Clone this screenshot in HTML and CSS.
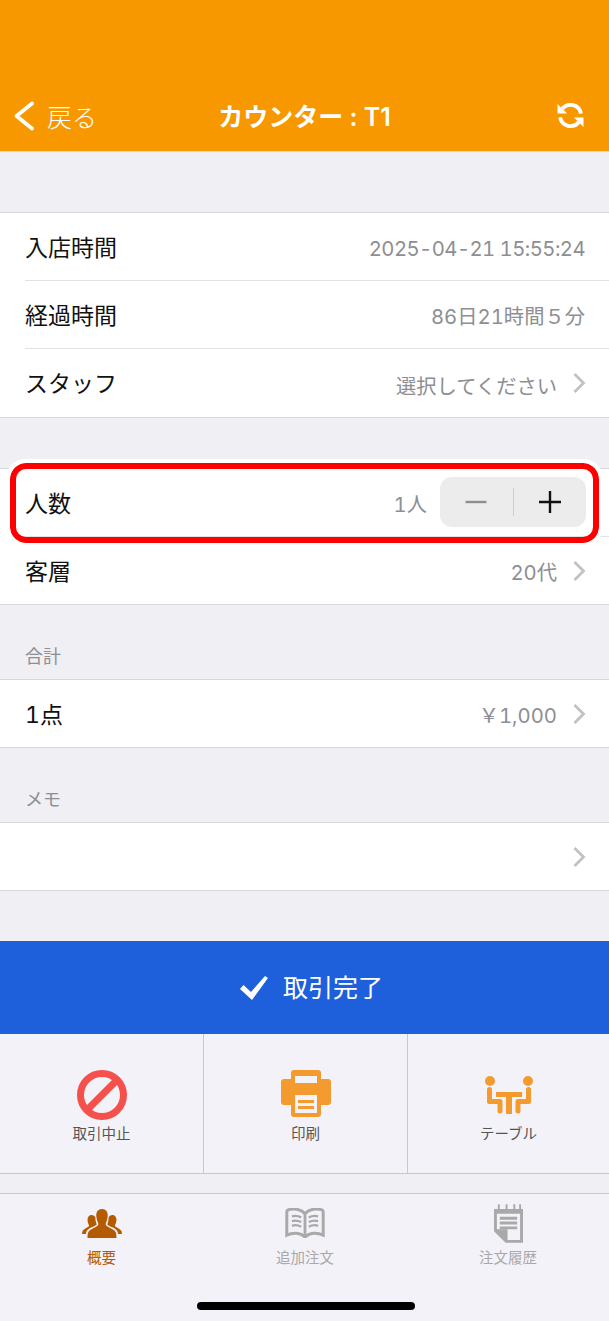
FILE: index.html
```html
<!DOCTYPE html>
<html lang="ja">
<head>
<meta charset="utf-8">
<title>カウンター : T1</title>
<link rel="stylesheet" href="styles.css">
</head>
<body>
<div class="screen">
  <header class="navbar">
    <div class="nav-back">
      <svg class="back-icon" viewBox="0 0 20 30"><path d="M18 2.500 L2.500 15 L18 27.500" fill="none" stroke="#fff" stroke-width="3.800" stroke-linecap="round" stroke-linejoin="round"/></svg>
      <span>戻る</span>
    </div>
    <div class="nav-title">カウンター : T1</div>
    <svg class="refresh-icon" viewBox="0 0 28 28">
      <path d="M5.500 7 A11 11 0 0 1 24.800 12" fill="none" stroke="#fff" stroke-width="4"/>
      <path d="M0.500 2 L0.500 12 L10.500 12 Z" fill="#fff"/>
      <path d="M3.200 16 A11 11 0 0 0 22.500 21" fill="none" stroke="#fff" stroke-width="4"/>
      <path d="M27.500 26 L27.500 16 L17.500 16 Z" fill="#fff"/>
    </svg>
  </header>

  <section class="group group-first">
    <div class="row"><span class="label">入店時間</span><span class="value value-date">2025-04-21 15:55:24</span></div>
    <div class="row"><span class="label">経過時間</span><span class="value">86日21時間５分</span></div>
    <div class="row"><span class="label">スタッフ</span><span class="value value-low">選択してください</span><svg class="chev" viewBox="0 0 14 22"><path d="M2.500 2 L11.500 11 L2.500 20" /></svg></div>
  </section>

  <section class="group group-second">
    <div class="row row-people">
      <span class="label">人数</span><span class="value">1人</span>
      <div class="stepper">
        <span class="step"><svg viewBox="0 0 24 24"><path d="M1.500 12H22.500" stroke="#8e8e8e"/></svg></span>
        <span class="step-sep"></span>
        <span class="step"><svg viewBox="0 0 24 24"><path d="M1 12H23M12 1V23" stroke="#111"/></svg></span>
      </div>
    </div>
    <div class="row"><span class="label">客層</span><span class="value">20代</span><svg class="chev" viewBox="0 0 14 22"><path d="M2.500 2 L11.500 11 L2.500 20" /></svg></div>
    <div class="highlight"></div>
  </section>

  <div class="section-label">合計</div>
  <section class="group">
    <div class="row"><span class="label">1点</span><span class="value">￥1,000</span><svg class="chev" viewBox="0 0 14 22"><path d="M2.500 2 L11.500 11 L2.500 20" /></svg></div>
  </section>

  <div class="section-label">メモ</div>
  <section class="group">
    <div class="row"><span class="value"></span><svg class="chev" viewBox="0 0 14 22"><path d="M2.500 2 L11.500 11 L2.500 20" /></svg></div>
  </section>

  <div class="complete">
    <svg class="check" viewBox="0 0 28 24"><path d="M0 13 L3.500 9 L11 16 L25 0 L28 2 L12 24 Z" fill="#fff"/></svg>
    <span>取引完了</span>
  </div>

  <div class="actions">
    <div class="action">
      <svg class="action-icon" viewBox="0 0 50 50"><circle cx="25" cy="25" r="21.500" fill="none" stroke="#f5504c" stroke-width="7"/><path d="M10 40 L40 10" stroke="#f5504c" stroke-width="7"/></svg>
      <span>取引中止</span>
    </div>
    <div class="action">
      <svg class="action-icon" viewBox="0 0 50 50">
        <path fill="#f49b30" fill-rule="evenodd" d="M10 3 a3 3 0 0 1 3-3 H37 a3 3 0 0 1 3 3 V9 H47 a3 3 0 0 1 3 3 V32 a3 3 0 0 1-3 3 H40 V44 a3 3 0 0 1-3 3 H13 a3 3 0 0 1-3-3 V35 H3 a3 3 0 0 1-3-3 V12 a3 3 0 0 1 3-3 H10 Z M14 6 V13 H36 V6 Z M14 25 V43 H36 V25 Z"/>
        <path fill="#f49b30" d="M17 30 H33 V33 H17 Z M17 36 H33 V39 H17 Z"/>
      </svg>
      <span>印刷</span>
    </div>
    <div class="action">
      <svg class="action-icon" viewBox="-1 -6 50 50" fill="#f49b30">
        <circle cx="5" cy="5" r="5"/><circle cx="43" cy="5" r="5"/>
        <path d="M2 13.500 a2.500 2.500 0 0 1 5 0 V23 H15 a2.500 2.500 0 0 1 2.500 2.500 V35 a2.500 2.500 0 0 1-5 0 V28 H4 a2 2 0 0 1-2-2 Z"/>
        <path d="M46 13.500 a2.500 2.500 0 0 0-5 0 V23 H33 a2.500 2.500 0 0 0-2.500 2.500 V35 a2.500 2.500 0 0 0 5 0 V28 H44 a2 2 0 0 0 2-2 Z"/>
        <path d="M11 16 H37 V21 H27 V38 H21 V21 H11 Z"/>
      </svg>
      <span>テーブル</span>
    </div>
  </div>

  <nav class="tabbar">
    <div class="tab tab-active">
      <svg class="tab-icon tab-icon-people" viewBox="0 0 40 29" fill="#b45a00">
        <path d="M20 0 C16 0 14 3 14.300 7 C14.500 11 16 13.500 16.500 15 C16 17 13 18.500 9 20.500 C6 22 5.500 25 5.500 29 H34.500 C34.500 25 34 22 31 20.500 C27 18.500 24 17 23.500 15 C24 13.500 25.500 11 25.700 7 C26 3 24 0 20 0 Z"/>
        <path d="M9.500 6 C7 6 5.500 8 5.500 11 C5.700 14 7 16 7.200 17 C6 18.500 2 19.500 0.500 22 L0 25 H3.800 C4.200 22 5.500 20.500 8 19 C10.500 18 13 17 14.800 15.500 C14 13.500 13.400 12 13.400 8.500 C12.800 7 11.500 6 9.500 6 Z"/>
        <path transform="matrix(-1 0 0 1 40 0)" d="M9.500 6 C7 6 5.500 8 5.500 11 C5.700 14 7 16 7.200 17 C6 18.500 2 19.500 0.500 22 L0 25 H3.800 C4.200 22 5.500 20.500 8 19 C10.500 18 13 17 14.800 15.500 C14 13.500 13.400 12 13.400 8.500 C12.800 7 11.500 6 9.500 6 Z"/>
      </svg>
      <span>概要</span>
    </div>
    <div class="tab">
      <svg class="tab-icon" viewBox="0 0 42 32" fill="none" stroke="#a9a9a9" stroke-width="2.400">
        <path d="M21 6 C17 1 8 0 3 2 C1.800 2.500 1.600 3 1.600 4 V29 C8 26 16 26 21 31 C26 26 34 26 40.400 29 V4 C40.400 3 40.200 2.500 39 2 C34 0 25 1 21 6 Z" stroke-width="3.200"/>
        <path d="M21 6 V31" stroke-width="3"/>
        <path d="M7 9 C10 8 14 8.500 17 10 M7 14 C10 13 14 13.500 17 15 M7 19 C10 18 14 18.500 17 20 M35 9 C32 8 28 8.500 25 10 M35 14 C32 13 28 13.500 25 15 M35 19 C32 18 28 18.500 25 20"/>
      </svg>
      <span>追加注文</span>
    </div>
    <div class="tab">
      <svg class="tab-icon tab-icon-note" viewBox="0 0 30 40">
        <path fill="#a9a9a9" fill-rule="evenodd" d="M0 5 H4 V0 H6 V5 H12 V0 H14 V5 H20 V0 H22 V5 H26 V0 H28 V5 H30 V40 H12 L0 28 Z M3 10 V26 H14 V37 H27 V10 Z"/>
        <path fill="#a9a9a9" d="M6 13 H24 V16 H6 Z M6 18 H24 V21 H6 Z M6 23 H24 V26 H6 Z"/>
      </svg>
      <span>注文履歴</span>
    </div>
    <div class="home-indicator"></div>
  </nav>
</div>
</body>
</html>
```
FILE: styles.css
```css
* { box-sizing: border-box; }
html, body { margin: 0; padding: 0; }
body {
  width: 609px;
  height: 1321px;
  overflow: hidden;
  font-family: "Inter", "Noto Sans CJK JP", sans-serif;
  background: #efeff4;
  color: #111;
}
.screen { display: flex; flex-direction: column; height: 1321px; }

.navbar {
  height: 152px;
  flex: none;
  background: #f79800;
  border-bottom: 1px solid #dcdce0;
  color: #fff;
  position: relative;
  display: flex;
  align-items: center;
  justify-content: space-between;
  padding: 80px 25px 0 14px;
}
.nav-back { display: flex; align-items: center; gap: 13px; font-size: 25px; font-weight: 300; }
.back-icon { width: 20px; height: 30px; }
.nav-title {
  position: absolute;
  left: 0;
  right: 0;
  top: 99px;
  text-align: center;
  font-size: 25px;
  font-weight: 600;
  line-height: 36px;
}
.refresh-icon { width: 27px; height: 27px; }

.group {
  background: #fff;
  border-top: 1px solid #d8d8dc;
  border-bottom: 1px solid #d8d8dc;
  flex: none;
  position: relative;
}
.group-first { margin-top: 60px; }
.group-first .row:last-child { height: 69px; }
.group-second { margin-top: 50px; }
.row {
  height: 68px;
  margin-left: 25px;
  padding-right: 24px;
  display: flex;
  align-items: center;
  border-top: 1px solid #e2e2e4;
}
.row:first-child { border-top: none; height: 67px; }
.label { font-size: 23px; margin-right: auto; padding-bottom: 2px; font-variant-numeric: tabular-nums; }
.value {
  font-size: 20.300px;
  color: #8e8e93;
  margin-left: auto;
  padding-top: 1px;
  white-space: nowrap;
  font-variant-numeric: tabular-nums;
}
.value-low { padding-top: 4px; }
.value-date { padding-top: 4px; letter-spacing: -0.550px; }
.chev { width: 14px; height: 22px; margin-left: 15px; margin-right: -1px; }
.chev path { fill: none; stroke: #c2c2c6; stroke-width: 2.800; }

.row-people { padding-right: 23px; }
.stepper {
  width: 146px;
  height: 50px;
  margin-left: 13px;
  margin-bottom: 2px;
  background: #ececec;
  border-radius: 12px;
  display: flex;
  align-items: center;
}
.step { flex: 1; display: flex; justify-content: center; }
.step svg { width: 24px; height: 24px; }
.step path { stroke-width: 2.400; fill: none; }
.step-sep { width: 1px; height: 28px; background: #d0d0d0; }

.highlight {
  position: absolute;
  left: 10px;
  top: -6px;
  width: 589px;
  height: 80px;
  border: 6px solid #f00;
  border-radius: 16px;
  outline: 4px solid #fff;
}

.section-label {
  height: 74px;
  flex: none;
  padding: 38px 0 0 25px;
  font-size: 18px;
  line-height: 28px;
  color: #8e8e93;
}

.complete {
  margin-top: 50px;
  height: 93px;
  flex: none;
  background: #1e60dc;
  color: #fff;
  display: flex;
  align-items: center;
  justify-content: center;
  gap: 15px;
  font-size: 25px;
  padding: 0 0 4px 14px;
}
.check { width: 28px; height: 24px; margin-top: 4px; }

.actions {
  height: 140px;
  flex: none;
  background: #f3f2f8;
  border-bottom: 1px solid #c8c8cc;
  display: grid;
  grid-template-columns: 203px 204px 1fr;
}
.action {
  display: flex;
  flex-direction: column;
  align-items: center;
  padding-top: 36px;
  gap: 2px;
  font-size: 14.500px;
  color: #555;
  border-left: 1px solid #c8c8cc;
}
.action:first-child { border-left: none; }
.action-icon { width: 50px; height: 50px; }

.tabbar {
  margin-top: 19px;
  flex: 1;
  background: #f3f2f8;
  border-top: 1px solid #c8c8cc;
  display: grid;
  grid-template-columns: 203px 204px 1fr;
  position: relative;
}
.tab {
  display: flex;
  flex-direction: column;
  align-items: center;
  font-size: 14.500px;
  line-height: 20px;
  color: #a9a9a9;
  padding-top: 14px;
}
.tab span { margin-top: 10px; }
.tab-active { color: #b45a00; }
.tab-icon { width: 40px; height: 30px; }
.tab-icon-people { height: 29px; margin-top: 1px; }
.tab-icon-note { width: 29px; height: 39px; margin: -4px 0 -5px; }
.home-indicator {
  position: absolute;
  left: 197px;
  bottom: 11px;
  width: 218px;
  height: 8px;
  border-radius: 4px;
  background: #000;
}
```
